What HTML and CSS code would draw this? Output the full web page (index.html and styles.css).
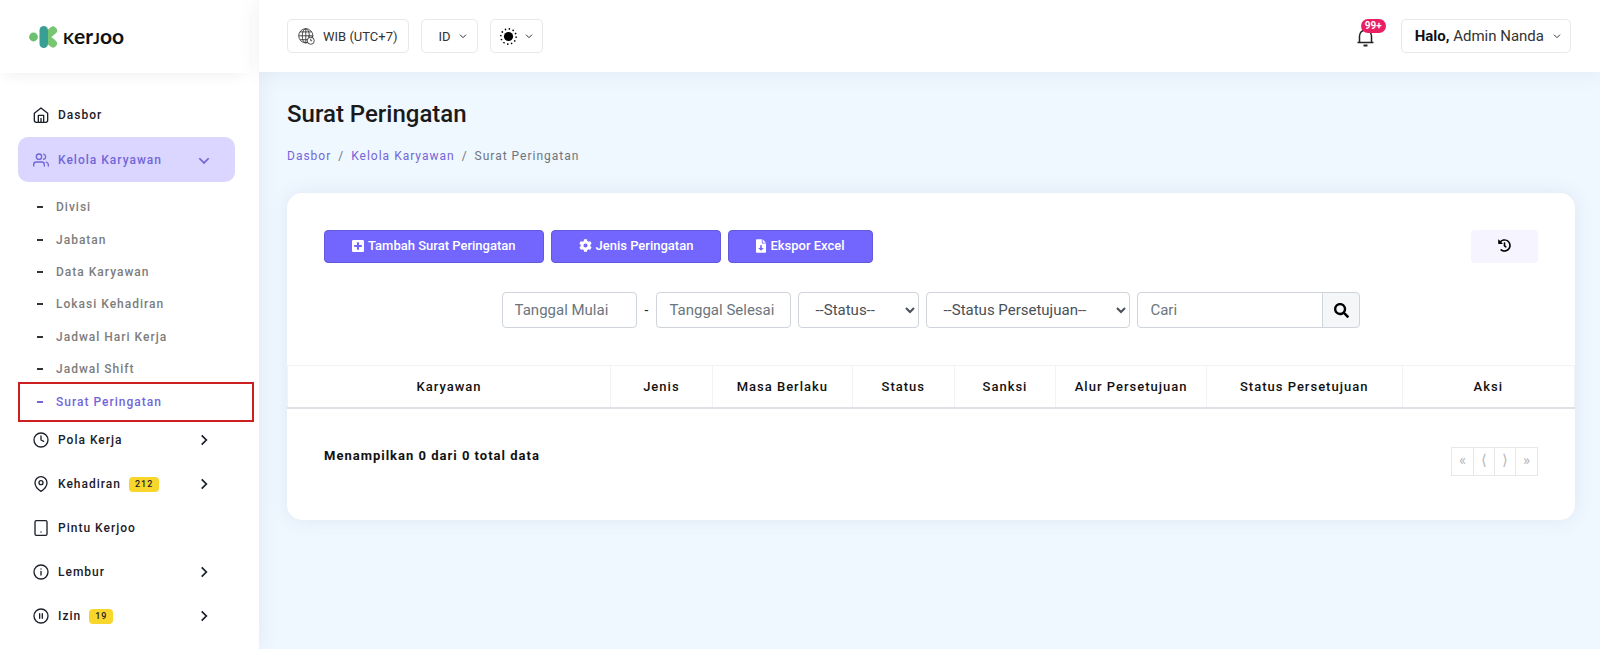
FILE: index.html
```html
<!DOCTYPE html>
<html lang="id">
<head>
	<meta charset="utf-8">
	<meta name="viewport" content="width=device-width, initial-scale=1">
	<title>Surat Peringatan - Kerjoo</title>
	<link rel="stylesheet" href="styles.css">
</head>
<body>

<div class="wrapper">

	<aside class="sidebar">
		<a href="#" class="logo">
			<svg width="29" height="22" viewBox="0 0 29 22" aria-hidden="true">
				<circle cx="4.500" cy="11" r="4.400" fill="#6cc070"/>
				<path d="M15 12L24 4.500M15 10L24 17.500" stroke="#78c673" stroke-width="8" stroke-linecap="round"/>
				<rect x="10.500" y="0" width="8.500" height="22" rx="4.250" fill="#3a9f93"/>
			</svg>
			<span class="logo-text"><span class="cap">K</span>er<span class="cap">J</span>oo</span>
		</a>

		<nav>
			<ul class="menu">
				<li><a href="#" class="menu-link">
					<svg class="icon" viewBox="0 0 24 24"><path d="M2 9.500V20a3 3 0 0 0 3 3h14a3 3 0 0 0 3-3V9.500L12 1.500 2 9.500zM8 23V12.500h8V23M12 23v-6"/></svg>
					<span>Dasbor</span>
				</a></li>
				<li>
					<a href="#" class="menu-link active">
						<svg class="icon" viewBox="0 0 24 24"><path d="M17 21v-2a4 4 0 0 0-4-4H5a4 4 0 0 0-4 4v2M23 21v-2a4 4 0 0 0-3-3.870M16 3.130a4 4 0 0 1 0 7.750"/><circle cx="9" cy="7" r="4"/></svg>
						<span>Kelola Karyawan</span>
						<svg class="arrow" viewBox="0 0 24 24"><path d="M4 9l8 8 8-8"/></svg>
					</a>
					<ul class="submenu">
						<li><a href="#">Divisi</a></li>
						<li><a href="#">Jabatan</a></li>
						<li><a href="#">Data Karyawan</a></li>
						<li><a href="#">Lokasi Kehadiran</a></li>
						<li><a href="#">Jadwal Hari Kerja</a></li>
						<li><a href="#">Jadwal Shift</a></li>
						<li class="current"><a href="#">Surat Peringatan</a></li>
					</ul>
				</li>
				<li><a href="#" class="menu-link">
					<svg class="icon" viewBox="0 0 24 24"><circle cx="12" cy="12" r="10.500"/><path d="M12 6v6l4 2"/></svg>
					<span>Pola Kerja</span>
					<svg class="arrow" viewBox="0 0 24 24"><path d="M8 4l8 8-8 8"/></svg>
				</a></li>
				<li><a href="#" class="menu-link">
					<svg class="icon" viewBox="0 0 24 24"><path d="M21 10c0 7-9 13-9 13s-9-6-9-13a9 9 0 0 1 18 0z"/><circle cx="12" cy="10" r="3"/></svg>
					<span>Kehadiran</span>
					<span class="badge">212</span>
					<svg class="arrow" viewBox="0 0 24 24"><path d="M8 4l8 8-8 8"/></svg>
				</a></li>
				<li><a href="#" class="menu-link">
					<svg class="icon" viewBox="0 0 24 24"><rect x="3" y="1" width="18" height="22" rx="2"/><path d="M12 18h.010"/></svg>
					<span>Pintu Kerjoo</span>
				</a></li>
				<li><a href="#" class="menu-link">
					<svg class="icon" viewBox="0 0 24 24"><circle cx="12" cy="12" r="10.500"/><path d="M12 16.500V11M12 7.500h.010"/></svg>
					<span>Lembur</span>
					<svg class="arrow" viewBox="0 0 24 24"><path d="M8 4l8 8-8 8"/></svg>
				</a></li>
				<li><a href="#" class="menu-link">
					<svg class="icon" viewBox="0 0 24 24"><circle cx="12" cy="12" r="10.500"/><path d="M10 15.500v-7M14 15.500v-7"/></svg>
					<span>Izin</span>
					<span class="badge">19</span>
					<svg class="arrow" viewBox="0 0 24 24"><path d="M8 4l8 8-8 8"/></svg>
				</a></li>
			</ul>
		</nav>
	</aside>

	<div class="page">
		<header class="topbar">
			<button type="button" class="top-btn">
				<svg width="17" height="17" viewBox="0 0 24 24" fill="none" stroke="#333" stroke-width="1.200"><circle cx="11" cy="11" r="10"/><ellipse cx="11" cy="11" rx="5" ry="10"/><path d="M11 1v20M1 11h20M3 5.500h16M3 16.500h12"/><circle cx="18" cy="18" r="5" fill="#fff"/><path d="M18 15v3h2M15 13v-2M20 13v-2"/></svg>
				WIB (UTC+7)
			</button>
			<button type="button" class="top-btn lang">
				ID
				<svg class="caret" viewBox="0 0 24 24"><path d="M3 8l9 9 9-9"/></svg>
			</button>
			<button type="button" class="top-btn theme" aria-label="Tema">
				<svg width="17" height="17" viewBox="0 0 24 24"><circle cx="12" cy="12" r="6.500"/><circle cx="12" cy="12" r="10.800" fill="none" stroke="#000" stroke-width="2.200" stroke-dasharray="2 3.655"/></svg>
				<svg class="caret" viewBox="0 0 24 24"><path d="M3 8l9 9 9-9"/></svg>
			</button>

			<div class="top-right">
				<button type="button" class="bell" aria-label="Notifikasi">
					<svg width="17" height="20" viewBox="0 0 17 20" fill="none" stroke="#222" stroke-width="1.500"><path d="M.500 14.500h16M2.500 14.500V8a6 6 0 0 1 12 0v6.500"/><path d="M6.500 17.500h4" stroke-width="2"/></svg>
					<span class="count">99+</span>
				</button>
				<button type="button" class="top-btn user">
					<span><b>Halo,</b> Admin Nanda</span>
					<svg class="caret" viewBox="0 0 24 24"><path d="M3 8l9 9 9-9"/></svg>
				</button>
			</div>
		</header>

		<main>
			<h1>Surat Peringatan</h1>
			<ol class="breadcrumb">
				<li><a href="#">Dasbor</a></li>
				<li><a href="#">Kelola Karyawan</a></li>
				<li>Surat Peringatan</li>
			</ol>

			<section class="card">
				<div class="actions">
					<button type="button" class="btn">
						<svg width="12" height="14" viewBox="0 0 448 512"><path d="M400 32H48C21.500 32 0 53.500 0 80v352c0 26.500 21.500 48 48 48h352c26.500 0 48-21.500 48-48V80c0-26.500-21.500-48-48-48zm-32 252c0 6.600-5.400 12-12 12h-92v92c0 6.600-5.400 12-12 12h-56c-6.600 0-12-5.400-12-12v-92H92c-6.600 0-12-5.400-12-12v-56c0-6.600 5.400-12 12-12h92v-92c0-6.600 5.400-12 12-12h56c6.600 0 12 5.400 12 12v92h92c6.600 0 12 5.400 12 12v56z"/></svg>
						Tambah Surat Peringatan
					</button>
					<button type="button" class="btn">
						<svg width="13" height="13" viewBox="0 0 512 512"><path d="M487.400 315.700l-42.600-24.600c4.300-23.200 4.300-47 0-70.200l42.600-24.600c4.900-2.800 7.100-8.600 5.500-14-11.100-35.600-30-67.800-54.700-94.600-3.800-4.100-10-5.100-14.800-2.300L380.800 110c-17.900-15.400-38.500-27.300-60.800-35.100V25.800c0-5.600-3.900-10.500-9.400-11.700-36.700-8.200-74.300-7.800-109.200 0-5.500 1.200-9.400 6.100-9.400 11.700V75c-22.200 7.900-42.800 19.800-60.800 35.100L88.700 85.500c-4.900-2.800-11-1.900-14.800 2.300-24.700 26.700-43.600 58.900-54.700 94.600-1.700 5.400.600 11.200 5.500 14L67.300 221c-4.300 23.200-4.300 47 0 70.200l-42.600 24.600c-4.900 2.800-7.100 8.600-5.500 14 11.100 35.600 30 67.800 54.700 94.600 3.800 4.100 10 5.100 14.800 2.300l42.600-24.600c17.900 15.400 38.500 27.300 60.800 35.100v49.200c0 5.600 3.900 10.500 9.400 11.700 36.700 8.200 74.300 7.800 109.200 0 5.500-1.200 9.400-6.100 9.400-11.700v-49.200c22.200-7.900 42.800-19.800 60.800-35.100l42.600 24.600c4.900 2.800 11 1.900 14.800-2.300 24.700-26.700 43.600-58.900 54.700-94.600 1.500-5.500-.700-11.300-5.600-14.100zM256 336c-44.100 0-80-35.900-80-80s35.900-80 80-80 80 35.900 80 80-35.900 80-80 80z"/></svg>
						Jenis Peringatan
					</button>
					<button type="button" class="btn">
						<svg width="10" height="14" viewBox="0 0 384 512"><path fill-rule="evenodd" d="M224 0H24C11 0 0 11 0 24v464c0 13 11 24 24 24h336c13 0 24-11 24-24V160H248c-13 0-24-11-24-24zM256 0v128h128zM160 230h64v100h76L192 440 84 330h76z"/></svg>
						Ekspor Excel
					</button>
					<button type="button" class="btn-history" aria-label="Riwayat">
						<svg width="13" height="13" viewBox="0 0 512 512"><path d="M504 255.500c.300 136.600-111.200 248.400-247.800 248.500-59 0-113.200-20.500-155.800-54.900-11.100-8.900-11.900-25.500-1.800-35.600l11.300-11.300c8.600-8.600 22.400-9.600 31.900-2C173.100 425.100 212.800 440 256 440c101.700 0 184-82.300 184-184 0-101.700-82.300-184-184-184-48.800 0-93.100 19-126.100 50l50.800 50.800c10.100 10.100 2.900 27.300-11.300 27.300H24c-8.800 0-16-7.200-16-16V38.600c0-14.300 17.200-21.400 27.300-11.300l49.400 49.400C129.200 34.100 189.600 8 256 8c136.800 0 247.700 110.800 248 247.500zm-180.900 78.800l9.800-12.600c8.100-10.500 6.300-25.500-4.200-33.700L288 256.300V152c0-13.300-10.700-24-24-24h-16c-13.300 0-24 10.700-24 24v135.700l65.400 50.900c10.500 8.100 25.500 6.300 33.700-4.300z"/></svg>
					</button>
				</div>

				<form class="filter">
					<div class="range">
						<input type="text" class="date" placeholder="Tanggal Mulai" aria-label="Tanggal Mulai">
						<span>-</span>
						<input type="text" class="date" placeholder="Tanggal Selesai" aria-label="Tanggal Selesai">
					</div>
					<select class="status" aria-label="Status">
						<option>--Status--</option>
					</select>
					<select class="approval" aria-label="Status Persetujuan">
						<option>--Status Persetujuan--</option>
					</select>
					<div class="search">
						<input type="text" placeholder="Cari" aria-label="Cari">
						<button type="submit" aria-label="Cari data">
							<svg width="15" height="15" viewBox="0 0 512 512"><path d="M505 442.700L405.300 343c-4.500-4.500-10.600-7-17-7H372c27.600-35.300 44-79.700 44-128C416 93.100 322.900 0 208 0S0 93.100 0 208s93.100 208 208 208c48.300 0 92.700-16.400 128-44v16.300c0 6.400 2.500 12.500 7 17l99.700 99.700c9.400 9.400 24.600 9.400 33.900 0l28.300-28.300c9.400-9.400 9.400-24.600.100-34zM208 336c-70.700 0-128-57.200-128-128 0-70.700 57.200-128 128-128 70.700 0 128 57.200 128 128 0 70.700-57.200 128-128 128z"/></svg>
						</button>
					</div>
				</form>

				<table>
					<thead>
						<tr>
							<th class="col-karyawan">Karyawan</th>
							<th class="col-sm">Jenis</th>
							<th class="col-masa">Masa Berlaku</th>
							<th class="col-sm">Status</th>
							<th class="col-sm">Sanksi</th>
							<th class="col-alur">Alur Persetujuan</th>
							<th class="col-persetujuan">Status Persetujuan</th>
							<th>Aksi</th>
						</tr>
					</thead>
				</table>

				<div class="card-footer">
					<p>Menampilkan 0 dari 0 total data</p>
					<div class="pagination">
						<button type="button" disabled>«</button>
						<button type="button" disabled>⟨</button>
						<button type="button" disabled>⟩</button>
						<button type="button" disabled>»</button>
					</div>
				</div>
			</section>
		</main>
	</div>

</div>

</body>
</html>
```
FILE: styles.css
```css
*{
	box-sizing: border-box;
}
body{
	margin: 0;
	background: #eff7ff;
	font-family: Roboto, sans-serif;
	font-size: 14px;
	color: #212529;
}
ul, ol{
	list-style: none;
	margin: 0;
	padding: 0;
}
a{
	text-decoration: none;
}
button, input, select{
	font-family: inherit;
}
.wrapper{
	display: flex;
	min-height: 100vh;
}

/*-------- Sidebar -----------*/
.sidebar{
	width: 259px;
	flex-shrink: 0;
	background: #fff;
	box-shadow: 0 0 20px rgba(89, 102, 122, 0.1);
}
.logo{
	display: flex;
	align-items: center;
	gap: 5px;
	height: 73px;
	margin-right: 10px;
	padding-left: 29px;
	box-shadow: 0 8px 12px -6px rgba(89, 102, 122, 0.1);
}
.logo-text{
	font-family: Lato, sans-serif;
	font-size: 21px;
	font-weight: 700;
	line-height: 24px;
	color: #111;
}
.logo-text .cap{
	font-size: 16px;
}
.menu{
	padding: 20px 24px 0 18px;
}
.menu-link{
	display: flex;
	align-items: center;
	height: 44px;
	padding: 0 24px 0 15px;
	border-radius: 10px;
	font-size: 12px;
	font-weight: 500;
	letter-spacing: 1px;
	color: #1c202a;
}
.menu-link.active{
	height: 45px;
	background: #dad6ff;
	color: #7366d9;
}
.icon{
	width: 16px;
	height: 16px;
	margin-right: 9px;
	fill: none;
	stroke: currentColor;
	stroke-width: 2;
	stroke-linecap: round;
	stroke-linejoin: round;
}
.arrow{
	width: 14px;
	height: 14px;
	margin-left: auto;
	fill: none;
	stroke: currentColor;
	stroke-width: 3;
}
.badge{
	margin-left: 8px;
	padding: 0 6px;
	border-radius: 4px;
	background: #f8d62b;
	font-size: 9px;
	font-weight: 500;
	line-height: 15px;
}
.submenu{
	display: grid;
	grid-auto-rows: 1fr;
	height: 236px;
	padding-top: 9px;
}
.submenu li{
	display: flex;
	align-items: center;
	position: relative;
	padding-left: 19px;
}
.submenu li::before{
	content: "";
	width: 6px;
	height: 2px;
	margin-right: 13px;
	background: #333;
}
.submenu a{
	font-size: 12px;
	font-weight: 500;
	letter-spacing: 1px;
	color: #7d7d7d;
}
.submenu .current::before{
	background: #7366d9;
}
.submenu .current a{
	color: #7366d9;
}
.submenu .current::after{
	content: "";
	position: absolute;
	inset: -4px -19px -4px 0;
	border: 2px solid #cc1f1f;
	pointer-events: none;
}

/*-------- Topbar -----------*/
.page{
	flex: 1;
	min-width: 0;
}
.topbar{
	display: flex;
	align-items: center;
	gap: 12px;
	height: 72px;
	padding: 0 29px 0 28px;
	background: #fff;
	box-shadow: 0 0 20px rgba(89, 102, 122, 0.1);
}
.top-btn{
	display: flex;
	align-items: center;
	gap: 8px;
	height: 34px;
	padding: 0 10px;
	border: 1px solid #e6e8eb;
	border-radius: 5px;
	background: #fff;
	font-size: 13px;
	color: #333;
}
.lang{
	padding-left: 17px;
}
.theme{
	padding: 0 9px;
}
.caret{
	width: 8px;
	height: 8px;
	fill: none;
	stroke: #333;
	stroke-width: 3;
}
.top-right{
	display: flex;
	align-items: center;
	gap: 15px;
	margin-left: auto;
}
.bell{
	position: relative;
	width: 30px;
	height: 34px;
	padding: 6px 0 0 1px;
	border: 0;
	background: none;
	text-align: left;
}
.count{
	position: absolute;
	top: 0;
	left: 5px;
	padding: 0 4px;
	border-radius: 7px;
	background: #e91e63;
	font-size: 10px;
	font-weight: 700;
	line-height: 14px;
	color: #fff;
}
.user{
	gap: 9px;
	padding: 0 9px 0 13px;
	font-size: 15px;
}
.user b{
	color: #111;
}

/*-------- Content -----------*/
main{
	padding: 28px 25px 28px 28px;
}
h1{
	margin: 0;
	font-size: 24px;
	font-weight: 500;
	line-height: 28px;
	color: #1a1a1a;
}
.breadcrumb{
	display: flex;
	margin: 20px 0 29px;
	font-size: 12px;
	letter-spacing: 1px;
	line-height: 16px;
	color: #6c757d;
}
.breadcrumb li + li::before{
	content: "/";
	padding: 0 7px;
}
.breadcrumb a{
	color: #7366d9;
}
.card{
	border-radius: 15px;
	background: #fff;
	box-shadow: 0 0 20px rgba(89, 102, 142, 0.1);
}
.actions{
	display: flex;
	gap: 7px;
	padding: 37px 37px 0;
}
.btn{
	display: flex;
	align-items: center;
	gap: 4px;
	height: 33px;
	padding: 0 27px 2px;
	border: 1px solid #6458dd;
	border-radius: 4px;
	background: #7366ff;
	font-size: 13px;
	font-weight: 500;
	color: #fff;
}
.btn svg{
	fill: #fff;
}
.btn-history{
	width: 67px;
	height: 33px;
	margin-left: auto;
	padding: 0 0 4px;
	border: 0;
	border-radius: 4px;
	background: #f6f5ff;
}

/*-------- Filter -----------*/
.filter{
	display: flex;
	justify-content: center;
	gap: 7px;
	padding: 29px 37px 37px;
}
.filter input, .filter select{
	height: 36px;
	padding: 0 12px;
	border: 1px solid #ced4da;
	border-radius: 4px;
	background: #fff;
	font-size: 15px;
	color: #495057;
}
.filter input::placeholder{
	color: #6c757d;
}
.range{
	display: flex;
	align-items: center;
	gap: 8px;
}
.filter .date{
	width: 135px;
}
.filter .status{
	width: 121px;
}
.filter .approval{
	width: 204px;
}
.search{
	display: flex;
}
.search input{
	width: 186px;
	border-radius: 4px 0 0 4px;
}
.search button{
	width: 38px;
	margin-left: -1px;
	padding: 0;
	border: 1px solid #ced4da;
	border-radius: 0 4px 4px 0;
	background: #f5f6f7;
}
.search svg, .btn-history svg{
	vertical-align: middle;
}

/*-------- Table -----------*/
table{
	width: 100%;
	table-layout: fixed;
	border-collapse: collapse;
}
th{
	height: 42px;
	padding: 0;
	border: 1px solid #f1f3f6;
	border-bottom: 2px solid #dee2e6;
	font-size: 13px;
	font-weight: 500;
	letter-spacing: 1px;
	color: #111;
}
.col-karyawan{
	width: 25.1%;
}
.col-sm{
	width: 7.9%;
}
.col-masa{
	width: 10.9%;
}
.col-alur{
	width: 11.7%;
}
.col-persetujuan{
	width: 15.2%;
}
.card-footer{
	display: flex;
	justify-content: space-between;
	padding: 38px 37px 44px;
}
.card-footer p{
	margin: 0;
	font-size: 13px;
	font-weight: 700;
	letter-spacing: 1px;
	line-height: 18px;
	color: #111;
}
.pagination{
	display: flex;
}
.pagination button{
	height: 29px;
	padding: 0 7px 3px;
	border: 1px solid #e6e9ec;
	background: #fff;
	font-size: 15px;
	color: #b5b9bd;
}
.pagination button + button{
	border-left: 0;
}
```
